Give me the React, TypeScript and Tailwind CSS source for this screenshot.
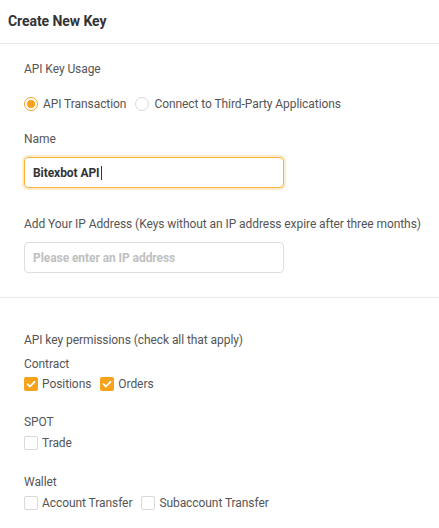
import { useState } from 'react'

const ORANGE = 'bg-[#f7a21b]'

function Radio({ checked, label }: { checked?: boolean; label: string }) {
  return (
    <label className="flex items-center gap-[5px] cursor-pointer">
      <span
        className={`w-[14px] h-[14px] rounded-full border flex items-center justify-center ${
          checked ? 'border-[#f7a21b]' : 'border-[#d9d9d9]'
        }`}
      >
        {checked && <span className={`w-[8px] h-[8px] rounded-full ${ORANGE}`} />}
      </span>
      <span className="text-[12px] text-[#555]">{label}</span>
    </label>
  )
}

function Check({ checked, label }: { checked?: boolean; label: string }) {
  return (
    <label className="flex items-center gap-[4px] cursor-pointer">
      <span
        className={`w-[14px] h-[14px] rounded-[2px] flex items-center justify-center ${
          checked ? ORANGE : 'border border-[#d9d9d9] bg-white'
        }`}
      >
        {checked && (
          <svg viewBox="0 0 14 14" className="w-[14px] h-[14px]">
            <path d="M3.5 7.2 L6 9.5 L10.5 4.8" fill="none" stroke="white" strokeWidth="1.8" strokeLinecap="round" strokeLinejoin="round" />
          </svg>
        )}
      </span>
      <span className="text-[12px] text-[#555]">{label}</span>
    </label>
  )
}

export default function App() {
  const [name] = useState('Bitexbot API')

  return (
    <div className="w-[439px] h-[528px] bg-white overflow-hidden font-['Roboto',sans-serif] tracking-[-0.07px] text-[#555]">
      {/* Header */}
      <div className="h-[44px] flex items-center px-[8px] border-b border-[#e8e8e8]">
        <h1 className="text-[14px] font-bold text-[#333]">Create New Key</h1>
      </div>

      {/* Usage + inputs */}
      <div className="px-[24px] pt-[17px] pb-[24px] border-b border-[#e8e8e8]">
        <p className="text-[12px] leading-[16px]">API Key Usage</p>
        <div className="flex items-center gap-[9px] mt-[18px]">
          <Radio checked label="API Transaction" />
          <Radio label="Connect to Third-Party Applications" />
        </div>

        <p className="text-[12px] leading-[16px] mt-[18px]">Name</p>
        <div className="mt-[10px] w-[260px] h-[31px] rounded-[4px] border border-[#f7b23b] shadow-[0_0_0_2px_rgba(247,178,59,0.25)] flex items-center px-[8px]">
          <span className="text-[12px] font-bold text-[#333]">{name}</span>
          <span className="w-px h-[14px] bg-[#333] ml-px" />
        </div>

        <p className="text-[12px] leading-[16px] mt-[28px] whitespace-nowrap">
          Add Your IP Address (Keys without an IP address expire after three months)
        </p>
        <div className="mt-[10px] w-[260px] h-[31px] rounded-[4px] border border-[#dedede] flex items-center px-[8px]">
          <span className="text-[12px] font-bold text-[#c0c0c0]">Please enter an IP address</span>
        </div>
      </div>

      {/* Permissions */}
      <div className="px-[24px] pt-[34px]">
        <p className="text-[12px] leading-[16px]">API key permissions (check all that apply)</p>

        <p className="text-[12px] leading-[16px] mt-[8px]">Contract</p>
        <div className="flex items-center gap-[9px] mt-[3px]">
          <Check checked label="Positions" />
          <Check checked label="Orders" />
        </div>

        <p className="text-[12px] leading-[16px] mt-[21px]">SPOT</p>
        <div className="flex items-center gap-[9px] mt-[4px]">
          <Check label="Trade" />
        </div>

        <p className="text-[12px] leading-[16px] mt-[22px]">Wallet</p>
        <div className="flex items-center gap-[9px] mt-[4px]">
          <Check label="Account Transfer" />
          <Check label="Subaccount Transfer" />
        </div>
      </div>
    </div>
  )
}
